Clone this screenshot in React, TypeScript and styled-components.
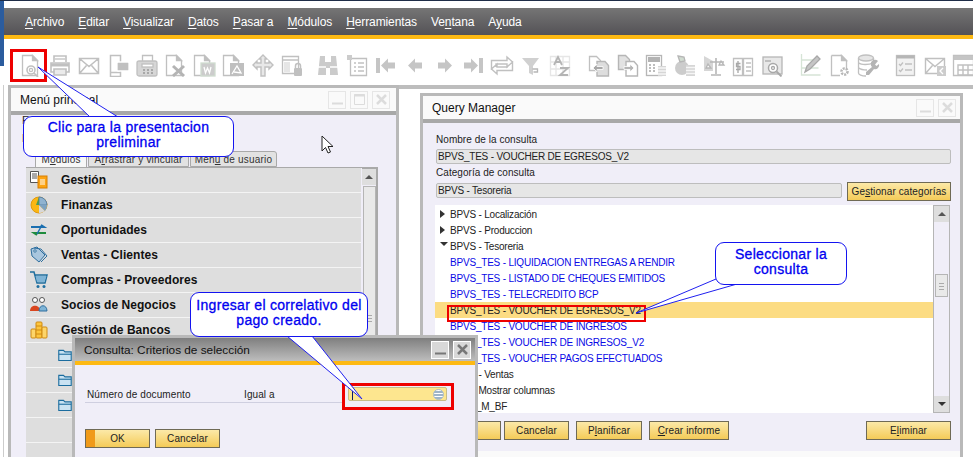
import React from "react";
import styled, { createGlobalStyle } from "styled-components";

const GlobalStyle = createGlobalStyle`
  html, body {
    margin: 0;
    padding: 0;
    width: 973px;
    height: 457px;
    overflow: hidden;
    background: #fff;
  }
`;

const font = `"Liberation Sans", Arial, sans-serif`;
const gray = "#b6b6b6";

const Page = styled.div`
  position: relative;
  width: 973px;
  height: 457px;
  overflow: hidden;
  display: flex;
  flex-direction: column;
  font-family: ${font};
  font-size: 10px;
  color: #222;
  background: #fff;
  border-top: 1px solid #1f2d47;
  box-sizing: border-box;
`;

const SideEdge = styled.div`
  position: absolute;
  left: 0;
  top: 0;
  width: 4px;
  height: 65px;
  background: #2b5c9e;
`;

const MenuBar = styled.div`
  margin: 7px 0 0 4px;
  height: 27px;
  display: flex;
  align-items: center;
  gap: 14px;
  padding-left: 21px;
  background: linear-gradient(#757575, #545256);
  border-bottom: 4px solid #fdb913;
`;

const MenuItem = styled.span`
  color: #fff;
  font-size: 12px;
  letter-spacing: -0.1px;
  u {
    text-underline-offset: 2px;
  }
`;

const Toolbar = styled.div`
  height: 46px;
  display: flex;
  align-items: flex-start;
  padding: 14px 0 0 16px;
  box-sizing: border-box;
`;

const ToolSlot = styled.div<{ $gap?: number }>`
  flex: none;
  width: 29px;
  height: 24px;
  margin-left: ${(p) => p.$gap ?? 0}px;
  display: flex;
  justify-content: center;
  opacity: 0.85;
  svg {
    display: block;
  }
`;

const Desktop = styled.div`
  position: relative;
  flex: 1;
  background: linear-gradient(90deg, #fff 0, #fff 3px, #ccc 3px, #ccc 4px, #fff 4px);
  overflow: hidden;
`;

const BackStrip = styled.div`
  position: absolute;
  left: 398px;
  right: 0;
  top: 0;
  height: 4px;
  background: #bdbdbd;
`;

const Win = styled.div<{ $left: number; $top: number; $width: number }>`
  position: absolute;
  left: ${(p) => p.$left}px;
  top: ${(p) => p.$top}px;
  width: ${(p) => p.$width}px;
  bottom: -40px;
  box-sizing: border-box;
  border: 3px solid #b9b9b9;
  background: #fafafa;
  display: flex;
  flex-direction: column;
`;

const TitleBar = styled.div<{ $active?: boolean; $pad?: number }>`
  flex: none;
  height: 27px;
  box-sizing: border-box;
  display: flex;
  align-items: center;
  justify-content: space-between;
  padding: 0 ${(p) => p.$pad ?? 4}px 0 9px;
  font-size: 12px;
  color: #111;
  background: ${(p) =>
    p.$active ? "linear-gradient(#7f7f7f, #bdbdbd)" : "#fafafa"};
  border-bottom: ${(p) => (p.$active ? "4px solid #fdb913" : "4px solid #a8a8a8")};
`;

const DialogTitle = styled.span`
  font-size: 11.8px;
`;

const WinButtons = styled.div`
  display: flex;
  gap: 4px;
`;

const WinButton = styled.div<{ $active?: boolean }>`
  width: 18px;
  height: 18px;
  box-sizing: border-box;
  border: 1px solid ${(p) => (p.$active ? "#fff" : "#e6e6e6")};
  background: ${(p) => (p.$active ? "#d8d8d8" : "#fafafa")};
  display: flex;
  align-items: center;
  justify-content: center;
`;

/* main menu window */
const MainBody = styled.div`
  flex: 1;
  background: #f0eef8;
  padding: 36px 0 0 15px;
`;

const Hidden = styled.div<{ $top: number }>`
  position: absolute;
  left: 11px;
  top: ${(p) => p.$top}px;
  font-size: 11px;
  color: #222;
`;

const Tabs = styled.div`
  display: flex;
  height: 16px;
  margin-left: 9px;
`;

const Tab = styled.div<{ $width: number; $active?: boolean }>`
  width: ${(p) => p.$width}px;
  box-sizing: border-box;
  background: ${(p) => (p.$active ? "#f7f7f7" : "#e2e2e2")};
  border: 1px solid #a9a9a9;
  border-bottom: ${(p) => (p.$active ? "none" : "1px solid #a9a9a9")};
  border-radius: 3px 3px 0 0;
  text-align: center;
  line-height: 15px;
  font-size: 10px;
  color: #333;
  letter-spacing: 0.2px;
  white-space: nowrap;
  margin-right: 1px;
`;

const ModulePane = styled.div`
  display: flex;
  width: 352px;
  border-top: 1px solid #a9a9a9;
`;

const ModuleList = styled.div`
  width: 335px;
  flex: none;
`;

const ModuleRow = styled.div`
  height: 24px;
  display: flex;
  align-items: center;
  background: #dedede;
  border-bottom: 1px solid #f4f4f4;
  font-size: 12px;
  font-weight: bold;
  color: #111;
  letter-spacing: 0.05px;
`;

const ModuleIcon = styled.div<{ $sub?: boolean }>`
  width: 35px;
  box-sizing: border-box;
  padding-left: ${(p) => (p.$sub ? 32 : 4)}px;
  flex: none;
  display: flex;
  svg {
    display: block;
    flex: none;
  }
`;

const ScrollBar = styled.div`
  width: 17px;
  margin-left: 1px;
  box-sizing: border-box;
  border-right: 2px solid #a9a9a9;
  border-top: 1px solid #a9a9a9;
  display: flex;
  flex-direction: column;
  align-items: center;
  background: #f0eef8;
`;

const ScrollButton = styled.div`
  width: 100%;
  height: 16px;
  flex: none;
  background: #dedede;
  display: flex;
  align-items: center;
  justify-content: center;
`;

const Arrow = styled.span<{ $dir: "up" | "down" | "right" }>`
  display: block;
  width: 0;
  height: 0;
  ${(p) =>
    p.$dir === "up"
      ? "border-left: 4px solid transparent; border-right: 4px solid transparent; border-bottom: 4px solid #555;"
      : p.$dir === "down"
      ? "border-left: 4px solid transparent; border-right: 4px solid transparent; border-top: 4px solid #333;"
      : "border-top: 4px solid transparent; border-bottom: 4px solid transparent; border-left: 5px solid #333;"}
`;

const Thumb = styled.div<{ $height: number; $top: number; $gripAt: number }>`
  position: relative;
  width: 13px;
  height: ${(p) => p.$height}px;
  margin-top: ${(p) => p.$top}px;
  flex: none;
  box-sizing: border-box;
  border: 1px solid #b5b5b5;
  background: #e9e9e9;
  &::after {
    content: "";
    position: absolute;
    left: 3px;
    top: ${(p) => p.$gripAt}px;
    width: 5px;
    height: 7px;
    background: repeating-linear-gradient(#aaa 0 1px, transparent 1px 3px);
  }
`;

/* query manager */
const QueryBody = styled.div`
  flex: 1;
  background: #f0eef8;
  padding: 10px 9px 0 13px;
  margin-bottom: 43px;
`;

const FieldLabel = styled.div`
  height: 16px;
  line-height: 14px;
  font-size: 10px;
  letter-spacing: 0.05px;
  color: #222;
`;

const ReadOnly = styled.div<{ $width: number }>`
  width: ${(p) => p.$width}px;
  height: 15px;
  box-sizing: border-box;
  border: 1px solid #bdbdbd;
  border-radius: 2px;
  background: #e6e6e6;
  line-height: 13px;
  padding-left: 1px;
  font-size: 10px;
  letter-spacing: -0.2px;
  color: #222;
  margin-bottom: 2px;
`;

const CategoryRow = styled.div`
  display: flex;
  align-items: center;
  justify-content: space-between;
  width: 515px;
  height: 18px;
`;

const GoldButton = styled.button<{ $width: number; $left?: number; $primary?: boolean }>`
  flex: none;
  width: ${(p) => p.$width}px;
  height: 19px;
  margin: 0 0 0 ${(p) => p.$left ?? 0}px;
  padding: 0;
  box-sizing: border-box;
  border: 1px solid #6f6a55;
  background: ${(p) =>
    p.$primary
      ? "linear-gradient(90deg, #f09a1a 0 9px, transparent 9px), linear-gradient(#fce9a8, #f4cb58)"
      : "linear-gradient(#fce9a8, #f4cb58)"};
  font-family: ${font};
  font-size: 10px;
  letter-spacing: 0.1px;
  white-space: nowrap;
  color: #222;
`;

const TreePane = styled.div`
  display: flex;
  width: 515px;
  height: 208px;
  margin: 5px 0 8px -1px;
  background: #fff;
`;

const TreeList = styled.div`
  width: 498px;
  flex: none;
  padding-top: 1px;
`;

const TreeRow = styled.div<{ $selected?: boolean; $kind: "cat" | "item" }>`
  height: 16px;
  display: flex;
  align-items: center;
  padding-left: 15px;
  font-size: 10px;
  letter-spacing: -0.2px;
  white-space: nowrap;
  position: relative;
  color: ${(p) => (p.$selected || p.$kind === "cat" ? "#222" : "#0a0ae6")};
  background: ${(p) => (p.$selected ? "#fcdc83" : "transparent")};
`;

const Expander = styled.span`
  position: absolute;
  left: 5px;
  top: 4px;
`;

const TreeScroll = styled(ScrollBar)`
  border: 1px solid #b5b5b5;
  width: 17px;
  margin: 0;
`;

const QueryActions = styled.div`
  display: flex;
  width: 515px;
`;

const Spacer = styled.div`
  flex: 1;
`;

/* dialog */
const DialogBody = styled.div`
  flex: 1;
  background: #f0eef8;
  padding: 23px 0 0 10px;
`;

const CriteriaRow = styled.div`
  display: flex;
  align-items: center;
  width: 260px;
  height: 13px;
  padding-bottom: 1px;
  border-bottom: 1px solid #cfcfe0;
  font-size: 10px;
  letter-spacing: 0.1px;
  position: relative;
`;

const CriteriaName = styled.span`
  width: 159px;
  flex: none;
  padding-left: 2px;
  box-sizing: border-box;
`;

const CriteriaInput = styled.div`
  position: absolute;
  left: 263px;
  top: -1px;
  width: 99px;
  height: 14px;
  box-sizing: border-box;
  background: #fde68f;
  border: 1px solid #c8bd88;
  border-radius: 2px;
  display: flex;
  align-items: center;
  justify-content: space-between;
  padding: 0 2px 0 3px;
`;

const Caret = styled.span`
  width: 1px;
  height: 11px;
  background: #0b1a66;
`;

const LinkOrb = styled.span`
  width: 9px;
  height: 9px;
  border-radius: 50%;
  background: repeating-linear-gradient(#fff 0 1px, #9fb4c8 1px 3px);
  border: 1px solid #a9bccb;
`;

const DialogActions = styled.div`
  display: flex;
  gap: 5px;
  margin-top: 26px;
`;

/* overlays */
const RedBox = styled.div<{ $l: number; $t: number; $w: number; $h: number }>`
  position: absolute;
  left: ${(p) => p.$l}px;
  top: ${(p) => p.$t}px;
  width: ${(p) => p.$w}px;
  height: ${(p) => p.$h}px;
  box-sizing: border-box;
  border: ${(p) => (p.$h < 20 ? 2 : 3)}px solid #ee0000;
`;

const Callout = styled.div<{ $l: number; $t: number; $w: number; $h: number }>`
  position: absolute;
  left: ${(p) => p.$l}px;
  top: ${(p) => p.$t}px;
  width: ${(p) => p.$w}px;
  height: ${(p) => p.$h}px;
  box-sizing: border-box;
  border: 1.5px solid #1414f0;
  border-radius: 9px;
  background: #fff;
  color: #0000f0;
  font-size: 14px;
  line-height: 15.5px;
  letter-spacing: 0.3px;
  -webkit-text-stroke: 0.3px #0000f0;
  text-align: center;
  padding-bottom: 3px;
  display: flex;
  align-items: center;
  justify-content: center;
`;

const TailLayer = styled.svg`
  position: absolute;
  left: 0;
  top: 0;
  pointer-events: none;
`;

const CursorMark = styled.svg`
  position: absolute;
  left: 321px;
  top: 134px;
`;

const S = ({ children }: { children: React.ReactNode }) => (
  <svg width="24" height="24" viewBox="0 0 24 24" fill="none" stroke={gray} strokeWidth="1.3">
    {children}
  </svg>
);

const Sheet = ({ x = 3 }: { x?: number }) => (
  <>
    <path d={`M${x + 0.5} 2.5h10l5 5v15h-15z`} />
    <path d={`M${x + 10.5} 2.5v5h5z`} fill={gray} />
  </>
);

const toolIcons: { gap?: number; icon: React.ReactNode }[] = [
  {
    icon: (
      <S>
        <Sheet />
        <circle cx="12" cy="17" r="4" fill="#fff" strokeWidth="1.6" />
        <circle cx="12" cy="17" r="1.6" />
        <path d="M15 20l4 4" strokeWidth="1.6" />
      </S>
    ),
  },
  {
    icon: (
      <S>
        <path d="M6 9V3h12v6M6 19H3V10h18v9h-3" strokeWidth="1.6" />
        <path d="M3 12h18" strokeWidth="3" />
        <path d="M6 16h12v6H6z" strokeWidth="1.6" fill="#e8e8e8" />
        <path d="M7 6h10" />
      </S>
    ),
  },
  {
    icon: (
      <S>
        <path d="M2.5 5.5h19v15h-19zM2.5 5.5l9.5 8 9.5-8M2.5 20.5l7-8M21.5 20.5l-7-8" strokeWidth="1.5" />
      </S>
    ),
  },
  {
    icon: (
      <S>
        <path d="M4.5 2.5h10v21h-10zM4.5 19.5h10" strokeWidth="1.5" />
        <rect x="11" y="9" width="12" height="9" rx="1" fill={gray} stroke="#fff" />
      </S>
    ),
  },
  {
    icon: (
      <S>
        <path d="M7.5 2.5h10v7h-10z" />
        <rect x="2" y="8" width="20" height="15" rx="2" fill="#cfcfcf" />
        <rect x="7" y="11" width="11" height="3" fill="#fff" />
        <path d="M8 17h2M12 17h2M16 17h2M8 20h2M12 20h2M16 20h2" stroke="#888" />
      </S>
    ),
  },
  {
    icon: (
      <S>
        <Sheet x={2} />
        <path d="M9 13l11 10M20 13L9 23" strokeWidth="3" stroke="#a8a8a8" />
      </S>
    ),
  },
  {
    icon: (
      <S>
        <Sheet x={1} />
        <rect x="8" y="10" width="14" height="13" fill="#c4c4c4" stroke="#c8d8c8" />
        <path d="M11 14l1.5 6 2-5 2 5 1.5-6" stroke="#fff" />
      </S>
    ),
  },
  {
    icon: (
      <S>
        <Sheet x={1} />
        <rect x="8" y="10" width="14" height="13" fill="#b4b4b4" stroke="none" />
        <path d="M10 21l5-8 4 7-7-1" stroke="#fff" />
      </S>
    ),
  },
  {
    icon: (
      <S>
        <path
          d="M12 2l4 4h-2v4h4V8l4 4-4 4v-2h-4v9h-4v-9H6v2l-4-4 4-4v2h4V6H8z"
          fill="#e4e4e4"
          strokeWidth="1.4"
        />
      </S>
    ),
  },
  {
    icon: (
      <S>
        <path d="M2.5 3.5h16v17h-16zM2.5 7h16" />
        <rect x="4" y="9" width="6" height="10" fill="#e2e2e2" stroke="none" />
        <rect x="14" y="15" width="8" height="8" rx="1" fill={gray} stroke="none" />
        <path d="M15.5 15v-2a2.5 2.5 0 0 1 5 0v2" strokeWidth="1.5" />
      </S>
    ),
  },
  {
    gap: 7,
    icon: (
      <S>
        <path d="M4 3h5v6h6V3h5l2 19h-8v-7h-4v7H2z" fill="#c2c2c2" stroke="none" />
        <path d="M2 14h8M14 14h8" stroke="#fff" strokeWidth="1.5" />
      </S>
    ),
  },
  {
    icon: (
      <S>
        <path d="M5.5 5.5h16v17h-16z" />
        <rect x="2" y="2" width="5" height="5" fill="#c4c4c4" stroke="none" />
        <path d="M9 10h2M13 10h6M9 14h2M13 14h6M9 18h2M13 18h6" />
      </S>
    ),
  },
  {
    icon: (
      <S>
        <path d="M2 5h4v15H2zM7 12.500l7-7v4h7v6h-7v4z" fill="#bcbcbc" stroke="none" />
      </S>
    ),
  },
  {
    icon: (
      <S>
        <path d="M5 12.500l7-7v4h7v6h-7v4z" fill="#bcbcbc" stroke="none" />
      </S>
    ),
  },
  {
    icon: (
      <S>
        <path d="M20 12.500l-7-7v4H6v6h7v4z" fill="#bcbcbc" stroke="none" />
      </S>
    ),
  },
  {
    icon: (
      <S>
        <path d="M22 5h-4v15h4zM17 12.500l-7-7v4H3v6h7v4z" fill="#bcbcbc" stroke="none" />
      </S>
    ),
  },
  {
    icon: (
      <S>
        <path d="M1.500 17V7.500H17V4l5.500 5-5.500 5v-3H6v3M22.500 8v9.500H7V21l-5.500-5 5.500-5v3h11" strokeWidth="1.4" />
      </S>
    ),
  },
  {
    icon: (
      <S>
        <path d="M3 5h17l-6 8v9l-4-2v-7z" fill="#c8c8c8" stroke="none" />
        <path d="M13.500 16h5v3h-4" stroke="#aaa" />
      </S>
    ),
  },
  {
    icon: (
      <S>
        <path d="M2.500 3.500h19v19h-19zM8 3.500v19M15 3.500v19M2.500 9h19M2.500 16h19" stroke="#e2e2e2" />
        <path d="M6 12l4-8 4 8M7.500 9h5M12 15h8l-8 7h8" stroke="#a8a8a8" strokeWidth="1.8" />
      </S>
    ),
  },
  {
    gap: 9,
    icon: (
      <S>
        <path d="M3.500 3.500h7l4 4v10h-11z" />
        <path d="M11 8.500h8l3.500 4v10.500H11z" fill="#d8d8d8" stroke="#aaa" strokeWidth="1.4" />
        <path d="M7 15l4-4v2.500h6v3h-6V19z" fill="#999" stroke="#fff" strokeWidth="0.8" />
      </S>
    ),
  },
  {
    icon: (
      <S>
        <path d="M3.500 2.500h7l4 4v10h-11z" fill="#ddd" stroke="#aaa" strokeWidth="1.4" />
        <path d="M11 8.500h8l3.500 4v10.500H11z" fill="#fff" stroke="#aaa" strokeWidth="1.4" />
        <path d="M19 15l-4-4v2.500H9v3h6V19z" fill="#aaa" stroke="#fff" strokeWidth="0.8" />
      </S>
    ),
  },
  {
    icon: (
      <S>
        <rect x="2.500" y="2.500" width="15" height="20" fill="#fff" stroke="#aaa" />
        <rect x="4" y="4" width="12" height="5" fill="#a6a6a6" stroke="none" />
        <path d="M5 12h2M9 12h2M5 15h2M9 15h2M5 18h2M9 18h2" stroke="#999" />
        <path d="M14 13h8v10h-8z" fill="#cfcfcf" stroke="none" />
        <path d="M14 15h8M14 18h8M14 21h8" stroke="#f4f4f4" />
      </S>
    ),
  },
  {
    icon: (
      <S>
        <circle cx="9" cy="15" r="7" fill="#c4c4c4" stroke="none" />
        <path d="M5 3l6 1 1 4-5 1z" fill="#cad7ca" stroke="#aaa" />
        <path d="M13 12h9v11h-9z" fill="#cfcfcf" stroke="none" />
        <path d="M13 14.500h9M13 17.500h9M13 20.500h9" stroke="#f4f4f4" />
      </S>
    ),
  },
  {
    icon: (
      <S>
        <path d="M2 3l9 5v10H2z" fill="#cfcfcf" stroke="none" />
        <path d="M14 5v16M9 22h10M8 9h14" stroke="#aaa" strokeWidth="1.6" />
        <path d="M6 11l-2 4h5zM19 8l-2 4h5z" stroke="#aaa" fill="#fff" />
      </S>
    ),
  },
  {
    icon: (
      <S>
        <path d="M2.500 5.500h9v17h-9zM12.500 5.500h9v17h-9z" />
        <path d="M15 10h5M15 14h5M15 18h5" />
        <path d="M7 8v12M9.500 10.500h-4v3h3.500v3h-4" stroke="#999" />
      </S>
    ),
  },
  {
    icon: (
      <S>
        <rect x="3" y="4" width="19" height="17" fill="#e4e4e4" stroke="#aaa" />
        <circle cx="13" cy="15" r="4.500" fill="#fff" stroke="#999" strokeWidth="1.5" />
        <circle cx="13" cy="15" r="1.500" stroke="#999" />
        <path d="M16.500 18.500l5 5" stroke="#999" strokeWidth="1.8" />
        <path d="M5 8h6" stroke="#999" />
      </S>
    ),
  },
  {
    gap: 9,
    icon: (
      <S>
        <path d="M3.500 1v21h19M3.500 7h17M3.500 15h17" stroke="#cfe0cf" />
        <path d="M7 19l2-6L19 3l3 3-10 10z" fill="#bcbcbc" stroke="#999" />
      </S>
    ),
  },
  {
    icon: (
      <S>
        <path d="M4.500 2.500h10l5 5v8M13 22.500H4.500v-20" />
        <path d="M14.500 2.500v5h5z" fill={gray} />
        <circle cx="17.500" cy="18.500" r="3" stroke="#aaa" strokeWidth="2.6" strokeDasharray="2 1" />
      </S>
    ),
  },
  {
    icon: (
      <S>
        <ellipse cx="10" cy="5" rx="7.500" ry="3" fill="#e2e2e2" />
        <path d="M2.500 5v15c0 1.500 3 3 7.500 3M17.500 5v5M3 10c2 2 10 2 14 0M3 15c2 2 5 2 8 2" />
        <path d="M22 8l-3 3.500 1.500 1.500L23 11a4 4 0 0 1-5 5l-5 6h-3v-3l6-5a4 4 0 0 1 6-6z" fill="#a8a8a8" stroke="none" />
      </S>
    ),
  },
  {
    gap: 9,
    icon: (
      <S>
        <rect x="2.500" y="2.500" width="18" height="20" fill="#f0f0f0" />
        <path d="M2.500 4h18" strokeWidth="3" stroke="#aaa" />
        <path d="M5 11l1.500 1.500L9 9.500M5 17l1.500 1.500L9 15.500M11 11h7M11 17h7" />
      </S>
    ),
  },
  {
    icon: (
      <S>
        <path d="M2.500 5.500h19v15h-19zM2.500 5.500l9.500 8 9.500-8M2.500 20.500l7-8" strokeWidth="1.4" />
        <rect x="14" y="13" width="9" height="10" fill="#c4c4c4" stroke="none" />
        <path d="M20 15l-3 3 3 3" stroke="#fff" />
      </S>
    ),
  },
  {
    icon: (
      <S>
        <path d="M1.500 2.500h20v20h-20z" />
        <path d="M1.500 5h20" strokeWidth="4" stroke="#bbb" />
        <path d="M6 12h16v10H6zM6 17h16M11 12v10M16 12v10" strokeWidth="1.4" />
      </S>
    ),
  },
];

const Mod = ({ children, w = 18, h = 18 }: { children: React.ReactNode; w?: number; h?: number }) => (
  <svg width={w} height={h} viewBox="0 0 18 18" fill="none">
    {children}
  </svg>
);

const moduleIcons = {
  gestion: (
    <Mod>
      <path d="M.5.500h8v11h-8z" fill="#fff" stroke="#555" />
      <path d="M2 3h5M2 5h5M2 7h5" stroke="#555" />
      <rect x="8" y="5" width="9" height="12" fill="#fca311" stroke="#d87f00" />
      <path d="M10 9h5M10 11h5M10 13h5" stroke="#fff" />
    </Mod>
  ),
  finanzas: (
    <Mod>
      <circle cx="9" cy="9" r="8" fill="#fbb714" stroke="#e09a10" />
      <path d="M9 9V1a8 8 0 0 1 8 8z" fill="#8fb3d0" stroke="#5b84a8" />
      <path d="M9 9l6 6a8 8 0 0 1-6 2z" fill="#d8d8d8" />
      <path d="M9 9h8a8 8 0 0 1-2 6z" fill="#7da3c2" />
      <path d="M9 1L6 9h3z" fill="#4f9a55" />
    </Mod>
  ),
  oportunidades: (
    <Mod>
      <path d="M1 6h13l-3-2" stroke="#1b6fb0" strokeWidth="2" />
      <path d="M16 12H4l3 2" stroke="#1f8c3d" strokeWidth="2" />
      <path d="M12 4l-5 9" stroke="#1b6fb0" strokeWidth="1.5" />
    </Mod>
  ),
  ventas: (
    <Mod>
      <path d="M1 3l6-2 8 8-6 7-7-6z" fill="#a9c6de" stroke="#2f6f9f" />
      <path d="M4 2l7 1 6 7-6 6" stroke="#2f6f9f" />
      <circle cx="5" cy="5" r="1.200" fill="#fff" stroke="#2f6f9f" />
    </Mod>
  ),
  compras: (
    <Mod>
      <path d="M0 1h4l3 11h8l2-8H5" stroke="#1f6f9f" strokeWidth="1.5" />
      <path d="M5.500 5h11l-2 6H7z" fill="#7fb4d6" />
      <circle cx="8" cy="15.500" r="1.500" fill="#1f6f9f" />
      <circle cx="14" cy="15.500" r="1.500" fill="#1f6f9f" />
    </Mod>
  ),
  socios: (
    <Mod>
      <circle cx="5" cy="4" r="2.500" fill="#fff" stroke="#555" />
      <circle cx="12" cy="4" r="2.500" fill="#fff" stroke="#555" />
      <path d="M0 15c0-7 10-7 10 0z" fill="#d9461f" />
      <path d="M9 15c0-7 8-7 8 0z" fill="#7fb4d6" stroke="#2f6f9f" />
    </Mod>
  ),
  bancos: (
    <Mod>
      <rect x="1" y="8" width="5" height="9" rx="1" fill="#fdd56a" stroke="#cf8a12" />
      <rect x="6" y="1" width="6" height="16" rx="1" fill="#fdc53c" stroke="#cf8a12" />
      <rect x="12" y="6" width="5" height="11" rx="1" fill="#fdd56a" stroke="#cf8a12" />
      <path d="M6 5h6M6 9h6M6 13h6" stroke="#cf8a12" />
    </Mod>
  ),
  folder: (
    <Mod w={14} h={14}>
      <path d="M1 3h6l2 2h8v11H1z" fill="#c9e2f2" stroke="#1b6c9e" strokeWidth="1.4" />
      <path d="M1 8h16" stroke="#1b6c9e" strokeWidth="1.4" />
    </Mod>
  ),
};

const modules: { name?: string; icon?: React.ReactNode; sub?: boolean }[] = [
  { name: "Gestión", icon: moduleIcons.gestion },
  { name: "Finanzas", icon: moduleIcons.finanzas },
  { name: "Oportunidades", icon: moduleIcons.oportunidades },
  { name: "Ventas - Clientes", icon: moduleIcons.ventas },
  { name: "Compras - Proveedores", icon: moduleIcons.compras },
  { name: "Socios de Negocios", icon: moduleIcons.socios },
  { name: "Gestión de Bancos", icon: moduleIcons.bancos },
  { icon: moduleIcons.folder, sub: true },
  { icon: moduleIcons.folder, sub: true },
  { icon: moduleIcons.folder, sub: true },
  {},
  {},
];

const treeRows: { text: string; kind: "cat" | "item"; arrow?: "right" | "down"; selected?: boolean }[] = [
  { text: "BPVS - Localización", kind: "cat", arrow: "right" },
  { text: "BPVS - Produccion", kind: "cat", arrow: "right" },
  { text: "BPVS - Tesoreria", kind: "cat", arrow: "down" },
  { text: "BPVS_TES - LIQUIDACION ENTREGAS A RENDIR", kind: "item" },
  { text: "BPVS_TES - LISTADO DE CHEQUES EMITIDOS", kind: "item" },
  { text: "BPVS_TES - TELECREDITO BCP", kind: "item" },
  { text: "BPVS_TES - VOUCHER DE EGRESOS_V2", kind: "item", selected: true },
  { text: "BPVS_TES - VOUCHER DE INGRESOS", kind: "item" },
  { text: "BPVS_TES - VOUCHER DE INGRESOS_V2", kind: "item" },
  { text: "BPVS_TES - VOUCHER PAGOS EFECTUADOS", kind: "item" },
  { text: "BPVS - Ventas", kind: "cat", arrow: "right" },
  { text: "BPVS Mostrar columnas", kind: "cat", arrow: "right" },
  { text: "BPVS_M_BF", kind: "cat", arrow: "right" },
];

const menu: [string, string, string][] = [
  ["", "A", "rchivo"],
  ["", "E", "ditar"],
  ["", "V", "isualizar"],
  ["", "D", "atos"],
  ["", "P", "asar a"],
  ["", "M", "ódulos"],
  ["", "H", "erramientas"],
  ["Ve", "n", "tana"],
  ["A", "y", "uda"],
];

const MinGlyph = ({ color }: { color: string }) => (
  <svg width="11" height="11" viewBox="0 0 11 11">
    <path d="M0 9.500h11" stroke={color} strokeWidth="2" />
  </svg>
);
const MaxGlyph = ({ color }: { color: string }) => (
  <svg width="11" height="11" viewBox="0 0 11 11" fill="none">
    <path d="M.5.500h10v10H.5z" stroke={color} />
    <path d="M0 1.500h11" stroke={color} strokeWidth="2" />
  </svg>
);
const CloseGlyph = ({ color }: { color: string }) => (
  <svg width="11" height="11" viewBox="0 0 11 11">
    <path d="M1 1l9 9M10 1l-9 9" stroke={color} strokeWidth="2.5" />
  </svg>
);

export default function App() {
  return (
    <Page>
      <GlobalStyle />
      <SideEdge />
      <MenuBar>
        {menu.map(([pre, key, rest]) => (
          <MenuItem key={pre + key + rest}>
            {pre}
            <u>{key}</u>
            {rest}
          </MenuItem>
        ))}
      </MenuBar>
      <Toolbar>
        {toolIcons.map((t, i) => (
          <ToolSlot key={i} $gap={t.gap}>
            {t.icon}
          </ToolSlot>
        ))}
      </Toolbar>
      <Desktop>
        <BackStrip />
        <Win $left={8} $top={0} $width={391}>
          <TitleBar $pad={6}>
            <span>Menú principal</span>
            <WinButtons>
              <WinButton>
                <MinGlyph color="#dcdcdc" />
              </WinButton>
              <WinButton>
                <MaxGlyph color="#dcdcdc" />
              </WinButton>
              <WinButton>
                <CloseGlyph color="#dcdcdc" />
              </WinButton>
            </WinButtons>
          </TitleBar>
          <MainBody>
            <Hidden $top={26}>E</Hidden>
            <Hidden $top={44}>F</Hidden>
            <Tabs>
              <Tab $width={52} $active>
                M<u>ó</u>dulos
              </Tab>
              <Tab $width={101}>
                A<u>r</u>rastrar y vincular
              </Tab>
              <Tab $width={87}>
                Men<u>ú</u> de usuario
              </Tab>
            </Tabs>
            <ModulePane>
              <ModuleList>
                {modules.map((m, i) => (
                  <ModuleRow key={i}>
                    <ModuleIcon $sub={m.sub}>{m.icon}</ModuleIcon>
                    {m.name}
                  </ModuleRow>
                ))}
              </ModuleList>
              <ScrollBar>
                <ScrollButton>
                  <Arrow $dir="up" />
                </ScrollButton>
                <Thumb $height={290} $top={1} $gripAt={128} />
              </ScrollBar>
            </ModulePane>
          </MainBody>
        </Win>

        <Win $left={420} $top={8} $width={543}>
          <TitleBar>
            <span>Query Manager</span>
            <WinButtons>
              <WinButton>
                <MinGlyph color="#dcdcdc" />
              </WinButton>
              <WinButton>
                <CloseGlyph color="#dcdcdc" />
              </WinButton>
            </WinButtons>
          </TitleBar>
          <QueryBody>
            <FieldLabel>Nombre de la consulta</FieldLabel>
            <ReadOnly $width={515}>BPVS_TES - VOUCHER DE EGRESOS_V2</ReadOnly>
            <FieldLabel>Categoría de consulta</FieldLabel>
            <CategoryRow>
              <ReadOnly $width={406}>BPVS - Tesoreria</ReadOnly>
              <GoldButton $width={104}>
                Ge<u>s</u>tionar categorías
              </GoldButton>
            </CategoryRow>
            <TreePane>
              <TreeList>
                {treeRows.map((r) => (
                  <TreeRow key={r.text} $kind={r.kind} $selected={r.selected}>
                    {r.arrow && (
                      <Expander>
                        <Arrow $dir={r.arrow} />
                      </Expander>
                    )}
                    {r.text}
                  </TreeRow>
                ))}
              </TreeList>
              <TreeScroll>
                <ScrollButton>
                  <Arrow $dir="up" />
                </ScrollButton>
                <Thumb $height={23} $top={52} $gripAt={8} />
                <Spacer />
                <ScrollButton>
                  <Arrow $dir="down" />
                </ScrollButton>
              </TreeScroll>
            </TreePane>
            <QueryActions>
              <GoldButton $width={65}>OK</GoldButton>
              <GoldButton $width={65} $left={3}>Cancelar</GoldButton>
              <GoldButton $width={66} $left={7}>
                P<u>l</u>anificar
              </GoldButton>
              <GoldButton $width={80} $left={7}>
                <u>C</u>rear informe
              </GoldButton>
              <Spacer />
              <GoldButton $width={85}>
                E<u>l</u>iminar
              </GoldButton>
            </QueryActions>
          </QueryBody>
        </Win>

        <Win $left={72} $top={250} $width={406}>
          <TitleBar $active>
            <DialogTitle>Consulta: Criterios de selección</DialogTitle>
            <WinButtons>
              <WinButton $active>
                <MinGlyph color="#777" />
              </WinButton>
              <WinButton $active>
                <CloseGlyph color="#777" />
              </WinButton>
            </WinButtons>
          </TitleBar>
          <DialogBody>
            <CriteriaRow>
              <CriteriaName>Número de documento</CriteriaName>
              Igual a
              <CriteriaInput>
                <Caret />
                <LinkOrb />
              </CriteriaInput>
            </CriteriaRow>
            <DialogActions>
              <GoldButton $width={65} $primary>OK</GoldButton>
              <GoldButton $width={65}>Cancelar</GoldButton>
            </DialogActions>
          </DialogBody>
        </Win>
      </Desktop>

      <CursorMark width="14" height="20" viewBox="0 0 14 20">
        <path d="M1 1v15l3.500-3.500L7 18l2.500-1L7 11.500h5z" fill="#fff" stroke="#222" />
      </CursorMark>

      <RedBox $l={10} $t={48} $w={37} $h={33} />
      <RedBox $l={342} $t={382} $w={112} $h={27} />
      <RedBox $l={447} $t={304} $w={199} $h={17} />

      <TailLayer width="973" height="457" viewBox="0 0 973 457">
        <path d="M38 66L90 116H118z" fill="#fff" stroke="#2020f0" />
        <path d="M287 335L362 398L312 335z" fill="#fff" stroke="#2020f0" />
        <path d="M636 312L716 278L737 283z" fill="#fff" stroke="#2020f0" />
      </TailLayer>

      <Callout $l={23} $t={115} $w={211} $h={41}>
        Clic para la presentacion
        <br />
        preliminar
      </Callout>
      <Callout $l={190} $t={291} $w={178} $h={45}>
        Ingresar el correlativo del
        <br />
        pago creado.
      </Callout>
      <Callout $l={715} $t={241} $w={132} $h={43}>
        Seleccionar la
        <br />
        consulta
      </Callout>
    </Page>
  );
}
